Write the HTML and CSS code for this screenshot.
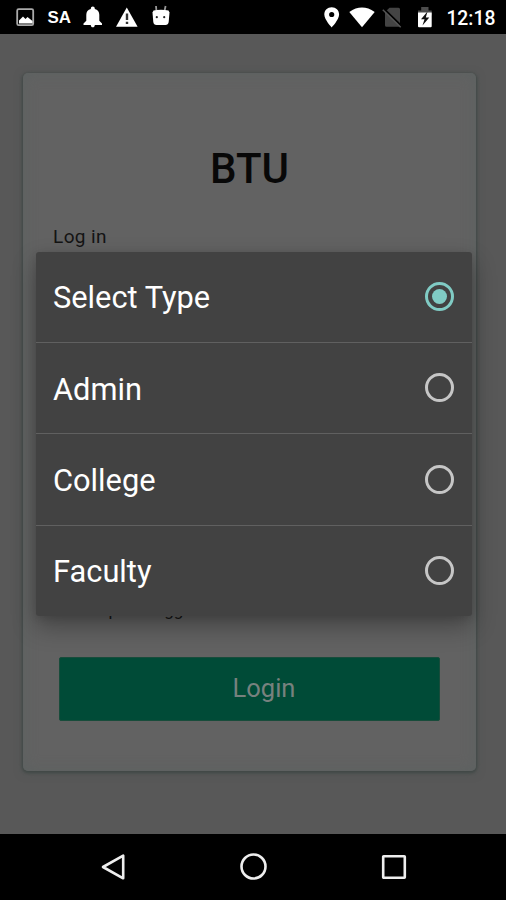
FILE: index.html
```html
<!DOCTYPE html>
<html lang="en">
<head>
<meta charset="utf-8">
<title>BTU</title>
<link rel="stylesheet" href="styles.css">
</head>
<body>
<div class="phone">
  <header class="status">
    <svg class="status-icons" width="180" height="34" viewBox="0 0 180 34">
      <rect x="17.2" y="9.2" width="16" height="16" rx="1.5" fill="none" stroke="#aaa" stroke-width="1.8"/>
      <path d="M19 23.5v-3l4-4 2.500 2.500 2-2 5 4v2.500z" fill="#fff"/>
      <text class="status-label" x="47.5" y="23.3" textLength="23.5" lengthAdjust="spacingAndGlyphs">SA</text>
      <path d="M83.500 25v-1.500l2.800-2.700v-6c0-3 1.600-5 4.500-5.700V8.500a2 2 0 0 1 4 0v.6c2.900.7 4.500 2.700 4.500 5.700v6l2.700 2.700V25zM90.800 25h4c0 1.500-.9 2.300-2 2.300s-2-.8-2-2.300z" fill="#fff"/>
      <path d="M126.800 7.500L137.600 26.700H116z" fill="#fff"/>
      <path d="M125.800 13.500h2.400v6.600h-2.400zM125.800 21.700h2.400v2.300h-2.400z" fill="#333"/>
      <path d="M156.500 12l-.5-6M164.300 12l1.300-6" fill="none" stroke="#999" stroke-width="1.800"/>
      <path d="M153.500 10.500q7.500-1.500 15 0l1 2-.8 9.500q-.5 3-3.200 3h-9q-2.800 0-3.200-3l-.8-9.500z" fill="#fff"/>
      <circle cx="156.800" cy="17.200" r="1.100" fill="#222"/><circle cx="164.200" cy="17.200" r="1.100" fill="#222"/>
    </svg>
    <svg class="status-icons" width="186" height="34" viewBox="320 0 186 34">
      <path fill-rule="evenodd" d="M331.700 7.300c-4.200 0-7.400 3-7.400 7.200 0 5.200 7.400 12.900 7.400 12.900s7.400-7.700 7.400-12.900c0-4.200-3.200-7.200-7.400-7.200zm0 4.600a2.600 2.600 0 1 1 0 5.200 2.600 2.600 0 0 1 0-5.200z" fill="#fff"/>
      <path d="M349.300 12Q362 3.200 374.700 12L362 27.300z" fill="#fff"/>
      <path d="M385 12L389.500 7.700H398.500a1.500 1.500 0 0 1 1.500 1.500V25.200q0 1.500-1.500 1.500H386.500q-1.500 0-1.500-1.500z" fill="#444"/>
      <path d="M383.500 8.500L401.500 26" stroke="#000" stroke-width="2"/>
      <path d="M382.800 9.800L400.700 27.200" stroke="#555" stroke-width="1.500"/>
      <path d="M418 10.500h3.200V7h7.300v3.500h3.200v5H418z" fill="#4c4c4c"/>
      <path d="M418 12.500h13.700v13.700q0 1-1 1H419q-1 0-1-1z" fill="#fff"/>
      <path d="M427.500 11.500L421 19.200h3.500L422.500 25.500 429.300 17.500h-3.500z" fill="#111"/>
      <text class="clock" x="446.400" y="25.200" textLength="49" lengthAdjust="spacingAndGlyphs">12:18</text>
    </svg>
  </header>

  <main class="screen">
    <section class="card">
      <h1 class="title">BTU</h1>
      <p class="subtitle">Log in</p>
      <label class="remember"><span class="checkbox"></span>Keep me logged in</label>
      <button class="login" type="button">Login</button>
    </section>
  </main>

  <div class="dialog" role="radiogroup">
    <div class="option"><span>Select Type</span><span class="radio radio-on"></span></div>
    <div class="option"><span>Admin</span><span class="radio"></span></div>
    <div class="option"><span>College</span><span class="radio"></span></div>
    <div class="option"><span>Faculty</span><span class="radio"></span></div>
  </div>

  <nav class="navbar">
    <svg width="28" height="30" viewBox="0 0 28 30"><path d="M4 15L24.200 3.700V26.300z" class="nav-line"/></svg>
    <svg width="28" height="30" viewBox="0 0 28 30"><circle cx="13.500" cy="14.500" r="12" class="nav-line"/></svg>
    <svg width="28" height="30" viewBox="0 0 28 30"><rect x="3.200" y="4.200" width="21.600" height="21.600" rx=".5" class="nav-line"/></svg>
  </nav>
</div>
</body>
</html>
```
FILE: styles.css
```css
* { box-sizing: border-box; }

body {
  margin: 0;
  background: #000;
  font-family: Roboto, "Liberation Sans", sans-serif;
}

.phone {
  position: relative;
  display: flex;
  flex-direction: column;
  width: 506px;
  height: 900px;
  overflow: hidden;
  background: #585858;
}

.status {
  display: flex;
  justify-content: space-between;
  height: 34px;
  background: #000;
}

.status-icons { display: block; }

.status-label {
  font: bold 17px "Liberation Sans", sans-serif;
  fill: #fff;
}

.clock {
  font-size: 19.5px;
  font-weight: 500;
  fill: #fff;
}

.screen {
  flex: 1;
  padding: 39px 30px 0 23px;
}

.card {
  display: flex;
  flex-direction: column;
  height: 698px;
  padding: 69px 36px 50px;
  border-radius: 5px;
  background: #626262;
  box-shadow: inset 0 0 14px #5c6261, 0 1px 3px 1px #404846, 0 2px 8px #4e5453;
}

.title {
  margin: 0;
  line-height: 54px;
  font-size: 42px;
  font-weight: 500;
  text-align: center;
  color: #080808;
}

.subtitle {
  margin: 29px 0 0 -6px;
  line-height: 24px;
  font-size: 19px;
  letter-spacing: .4px;
  color: #141414;
}

.remember {
  display: flex;
  align-items: center;
  gap: 12px;
  margin: auto 0 35px -6px;
  line-height: 24px;
  font-size: 17px;
  color: #141414;
}

.checkbox {
  width: 15px;
  height: 15px;
  margin-bottom: 4px;
  border: 2px solid #2d2d2d;
}

.login {
  height: 64px;
  padding: 0 0 2px 29px;
  border: 1px solid #184c3b;
  border-radius: 2px;
  background: #004b37;
  font: 25.5px Roboto, "Liberation Sans", sans-serif;
  color: #77817e;
}

.dialog {
  position: absolute;
  top: 251.5px;
  left: 36px;
  width: 435.5px;
  height: 364px;
  display: grid;
  grid-template-rows: 90.5px 91px 92px 1fr;
  border-radius: 3px;
  background: #424242;
  box-shadow: 0 11px 24px rgba(0, 0, 0, .3), 0 2px 8px rgba(0, 0, 0, .12);
}

.option {
  display: flex;
  align-items: center;
  justify-content: space-between;
  padding: 2px 18px 0 17px;
  font-size: 30.8px;
  color: #fff;
}

.option + .option { border-top: 1px solid #606060; }

.radio {
  display: grid;
  place-items: center;
  width: 29px;
  height: 29px;
  margin-bottom: 3px;
  border: 3px solid #c6c6c6;
  border-radius: 50%;
}

.radio-on { border-color: #80cbc4; }

.radio-on::after {
  content: "";
  width: 15px;
  height: 15px;
  border-radius: 50%;
  background: #80cbc4;
}

.navbar {
  display: flex;
  justify-content: space-between;
  align-items: center;
  height: 66px;
  padding: 0 98px 0 99px;
  background: #000;
}

.nav-line {
  fill: none;
  stroke: #eee;
  stroke-width: 2.6;
  stroke-linejoin: round;
}
```
